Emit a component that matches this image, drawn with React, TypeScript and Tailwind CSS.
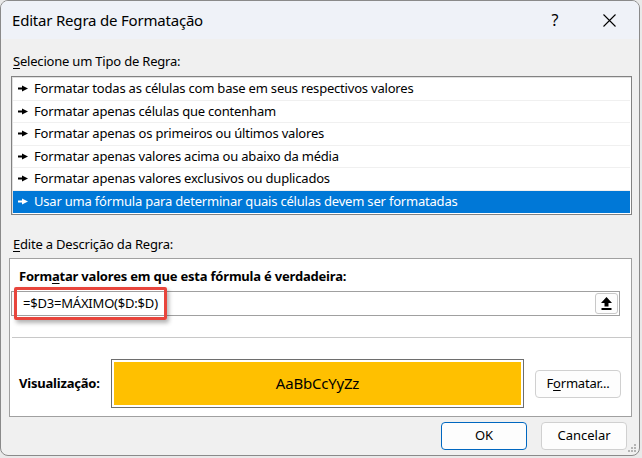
import React from 'react';

const rules = [
  'Formatar todas as células com base em seus respectivos valores',
  'Formatar apenas células que contenham',
  'Formatar apenas os primeiros ou últimos valores',
  'Formatar apenas valores acima ou abaixo da média',
  'Formatar apenas valores exclusivos ou duplicados',
  'Usar uma fórmula para determinar quais células devem ser formatadas',
];

const Pointer: React.FC<{ white?: boolean }> = ({ white }) => (
  <svg width="10" height="7" viewBox="0 0 10 7" className="shrink-0">
    <rect x="0" y="2.5" width="4" height="2" fill={white ? '#fff' : '#000'} />
    <path d="M4 0.5 L10 3.5 L4 6.5 Z" fill={white ? '#fff' : '#000'} />
  </svg>
);

const App: React.FC = () => {
  return (
    <div className="w-[642px] h-[458px] bg-[#e9e9e9] font-['Noto_Sans',sans-serif] text-[13px] text-black overflow-hidden">
      <div className="relative w-[640px] h-[456px] bg-[#f0f0f0] rounded-lg border border-[#8a8a8a] overflow-hidden flex flex-col">
        {/* title bar */}
        <div className="h-[38px] bg-[#eff2f8] flex items-center pl-[11px] shrink-0">
          <span className="text-[15px] flex-1 tracking-[-0.2px]">Editar Regra de Formatação</span>
          <span className="w-[20px] text-center text-[16px]">?</span>
          <svg width="13" height="13" viewBox="0 0 13 13" className="ml-[38px] mr-[23px]">
            <path d="M0.5 0.5 L12.5 12.5 M12.5 0.5 L0.5 12.5" stroke="#000" strokeWidth="1.1" />
          </svg>
        </div>

        <div className="flex flex-col pl-[10px] pr-[7px] pt-[13px]">
          <div className="pl-[2px] leading-[18px] tracking-[-0.2px]">
            <span className="underline underline-offset-2">S</span>elecione um Tipo de Regra:
          </div>
          <div className="mt-[6px] h-[139px] bg-white border border-[#828282] shadow-[inset_1px_1px_0_#e0e0e0] p-[1px] flex flex-col">
            {rules.map((r, i) => {
              const sel = i === rules.length - 1;
              return (
                <div
                  key={r}
                  className={
                    sel
                      ? 'h-[23px] flex items-center gap-[6px] pl-[5px] bg-[#0078d7] text-white tracking-[-0.2px]'
                      : 'h-[23px] flex items-center gap-[6px] pl-[5px] border-b border-[#f0f0f0] tracking-[-0.2px]'
                  }
                >
                  <Pointer white={sel} />
                  <span>{r}</span>
                </div>
              );
            })}
          </div>

          <div className="mt-[20px] pl-[2px] leading-[18px] tracking-[-0.2px]">
            <span className="underline underline-offset-2">E</span>dite a Descrição da Regra:
          </div>

          <div className="mt-[5px] -ml-[2px] bg-white border border-[#a0a0a0] flex flex-col h-[159px]">
            <div className="pl-[9px] pt-[8px] font-bold leading-[18px] tracking-[-0.2px]">
              Form<span className="underline underline-offset-2">a</span>tar valores em que esta fórmula é verdadeira:
            </div>
            <div className="relative mt-[6px] ml-[1px] mr-[11px] h-[25px] border border-[#a0a0a0] flex items-center pl-[11px] tracking-[-0.2px]">
              <span>=$D3=MÁXIMO($D:$D)</span>
              <div className="absolute left-[2px] top-[-5px] w-[153px] h-[33px] border-[3px] border-[#e8453c] rounded-[2px] shadow-[2px_3px_4px_rgba(0,0,0,0.3)]" />
              <div className="ml-auto mr-[1px] w-[23px] h-[21px] border border-[#c8c8c8] rounded-[3px] bg-[#fdfdfd] flex items-center justify-center">
                <svg width="11" height="13" viewBox="0 0 11 13">
                  <path d="M5.5 0 L11 6 L7.5 6 L7.5 9.5 L3.5 9.5 L3.5 6 L0 6 Z" fill="#000" />
                  <rect x="0.5" y="11" width="10" height="2" fill="#000" />
                </svg>
              </div>
            </div>
            <div className="mt-[21px] h-px bg-[#c8c8c8] ml-[2px]" />
            <div className="flex items-center mt-[21px] pl-[9px]">
              <span className="font-bold w-[92px] tracking-[-0.2px]">Visualização:</span>
              <div className="w-[413px] h-[49px] border border-[#6e6e6e] p-[2px]">
                <div className="w-full h-full bg-[#ffc000] flex items-center justify-center text-[15px] tracking-[-0.2px]">
                  AaBbCcYyZz
                </div>
              </div>
              <button className="ml-[11px] w-[86px] h-[28px] border border-[#d0d0d0] rounded-[4px] bg-[#fdfdfd] tracking-[-0.2px]">
                F<span className="underline underline-offset-2">o</span>rmatar...
              </button>
            </div>
          </div>

          <div className="flex justify-end gap-[14px] mt-[5px] pr-[5px]">
            <button className="w-[86px] h-[28px] border border-[#0067c0] rounded-[4px] bg-[#fdfdfd]">OK</button>
            <button className="w-[86px] h-[28px] border border-[#d0d0d0] rounded-[4px] bg-[#fdfdfd]">Cancelar</button>
          </div>
        </div>

        {/* size grip */}
        <svg width="9" height="9" viewBox="0 0 9 9" className="absolute right-[2px] bottom-[2px]">
          <g fill="#b4b4b4">
            <rect x="6" y="0" width="2" height="2" />
            <rect x="3" y="3" width="2" height="2" />
            <rect x="6" y="3" width="2" height="2" />
            <rect x="0" y="6" width="2" height="2" />
            <rect x="3" y="6" width="2" height="2" />
            <rect x="6" y="6" width="2" height="2" />
          </g>
        </svg>
      </div>
    </div>
  );
};

export default App;
